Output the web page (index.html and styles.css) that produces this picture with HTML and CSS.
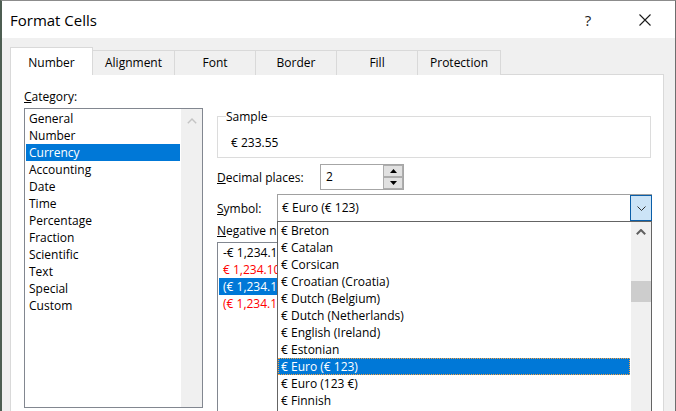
FILE: index.html
```html
<!DOCTYPE html>
<html lang="en">
<head>
<meta charset="utf-8">
<title>Format Cells</title>
<link rel="stylesheet" href="styles.css">
</head>
<body>
<div class="window">
  <div class="titlebar">
    <span class="title">Format Cells</span>
    <span class="help">?</span>
    <span class="close">
      <svg width="12" height="12" viewBox="0 0 12 12"><path d="M0.5 0.5 L11.5 11.5 M11.5 0.5 L0.5 11.5" stroke="#1a1a1a" stroke-width="1.1" fill="none"/></svg>
    </span>
  </div>
  <div class="body">
    <div class="tabs">
      <div class="tab active">Number</div>
      <div class="tab">Alignment</div>
      <div class="tab">Font</div>
      <div class="tab">Border</div>
      <div class="tab">Fill</div>
      <div class="tab">Protection</div>
    </div>
    <div class="panel">
      <div class="col-left">
        <div class="label"><u>C</u>ategory:</div>
        <div class="listbox cat">
          <div class="items">
            <div class="item">General</div>
            <div class="item">Number</div>
            <div class="item sel">Currency</div>
            <div class="item">Accounting</div>
            <div class="item">Date</div>
            <div class="item">Time</div>
            <div class="item">Percentage</div>
            <div class="item">Fraction</div>
            <div class="item">Scientific</div>
            <div class="item">Text</div>
            <div class="item">Special</div>
            <div class="item">Custom</div>
          </div>
          <div class="vscroll wide">
            <div class="arrow tall">
              <svg width="10" height="6" viewBox="0 0 10 6"><polyline points="0.8,5.2 5,1 9.2,5.2" stroke="#c4c4c4" stroke-width="1.4" fill="none"/></svg>
            </div>
          </div>
        </div>
      </div>
      <div class="col-right">
        <fieldset class="sample">
          <legend>Sample</legend>
          <div class="sample-value">€ 233.55</div>
        </fieldset>
        <div class="row dec">
          <span class="row-label dec-label"><u>D</u>ecimal places:</span>
          <div class="spinbox">
            <span class="spin-value">2</span>
            <div class="spin">
              <div class="spin-btn"><svg width="7" height="4" viewBox="0 0 7 4"><polygon points="0,4 3.5,0 7,4" fill="#000"/></svg></div>
              <div class="spin-btn"><svg width="7" height="4" viewBox="0 0 7 4"><polygon points="0,0 3.5,4 7,0" fill="#000"/></svg></div>
            </div>
          </div>
        </div>
        <div class="row sym">
          <span class="row-label sym-label"><u>S</u>ymbol:</span>
          <div class="combo">
            <span class="combo-text">€ Euro (€ 123)</span>
            <span class="combo-btn"><svg width="9" height="5" viewBox="0 0 9 5"><polyline points="0.5,0.5 4.5,4.5 8.5,0.5" stroke="#333" stroke-width="1" fill="none"/></svg></span>
            <div class="dropdown">
              <div class="items drop-items">
                <div class="item">€ Breton</div>
                <div class="item">€ Catalan</div>
                <div class="item">€ Corsican</div>
                <div class="item">€ Croatian (Croatia)</div>
                <div class="item">€ Dutch (Belgium)</div>
                <div class="item">€ Dutch (Netherlands)</div>
                <div class="item">€ English (Ireland)</div>
                <div class="item">€ Estonian</div>
                <div class="item sel focus">€ Euro (€ 123)</div>
                <div class="item">€ Euro (123 €)</div>
                <div class="item">€ Finnish</div>
              </div>
              <div class="vscroll">
                <div class="arrow">
                  <svg width="10" height="6" viewBox="0 0 10 6"><polyline points="0.8,5.2 5,1 9.2,5.2" stroke="#606060" stroke-width="2" fill="none"/></svg>
                </div>
                <div class="thumb"></div>
              </div>
            </div>
          </div>
        </div>
        <div class="label neg-label"><u>N</u>egative numbers:</div>
        <div class="listbox neg">
          <div class="items">
            <div class="item">-€ 1,234.10</div>
            <div class="item red">€ 1,234.10</div>
            <div class="item sel">(€ 1,234.10)</div>
            <div class="item red">(€ 1,234.10)</div>
          </div>
        </div>
      </div>
    </div>
  </div>
</div>
</body>
</html>
```
FILE: styles.css
```css
* { box-sizing: border-box; }
html, body { margin: 0; padding: 0; }
body {
  width: 676px;
  height: 411px;
  overflow: hidden;
  background: #46584c;
  font-family: "Open Sans", "Noto Sans", sans-serif;
  font-size: 12px;
  color: #000;
}
u { text-decoration: underline; text-underline-offset: 1px; }

.window {
  width: 676px;
  height: 411px;
  border-top: 1px solid #8c8c8c;
  border-left: 2px solid #4d5e52;
  border-right: 1px solid #6e6e6e;
  background: #f0f0f0;
  display: flex;
  flex-direction: column;
  overflow: hidden;
}

.titlebar {
  height: 37px;
  flex: none;
  background: #fff;
  display: flex;
  align-items: center;
  padding-left: 8px;
}
.title { flex: 1; font-size: 15px; color: #000; }
.help { width: 46px; text-align: center; font-size: 15px; color: #222; }
.close { width: 46px; margin-left: 11px; margin-right: 7px; display: flex; justify-content: center; }

.body { flex: 1; padding: 9px 11px 0 8px; }

.tabs {
  display: flex;
  align-items: flex-end;
  height: 28px;
  margin-bottom: -1px;
}
.tab {
  height: 25px;
  min-width: 81px;
  padding: 3px 12px 0;
  text-align: center;
  line-height: 17px;
  border-top: 1px solid #d9d9d9;
  border-right: 1px solid #d9d9d9;
  background: #f0f0f0;
}
.tab.active {
  height: 28px;
  min-width: 83px;
  padding-top: 6px;
  border: 1px solid #d9d9d9;
  border-bottom: none;
  background: #fff;
  position: relative;
  z-index: 1;
}

.panel {
  height: 360px;
  background: #fff;
  border: 1px solid #d9d9d9;
  display: flex;
  gap: 14px;
  padding: 13px 12px 0 13px;
}
.col-left { width: 179px; flex: none; }
.col-right { flex: 1; min-width: 0; }

.label { line-height: 17px; white-space: nowrap; }

.listbox {
  margin-top: 3px;
  border: 1px solid #828790;
  display: flex;
  background: #fff;
}
.listbox.cat { height: 300px; }
.listbox.neg { height: 200px; }
.items { flex: 1; padding: 1px; min-width: 0; }
.item { height: 17px; line-height: 17px; padding-left: 3px; padding-top: 1px; line-height: 16px; white-space: nowrap; overflow: hidden; }
.neg .item { padding-left: 4px; }
.item.sel { background: #0078d7; color: #fff; }
.item.red { color: #ff0000; }
.item.focus { outline: 1px dotted #f5a142; outline-offset: -1px; }

.vscroll { width: 20px; flex: none; background: #f0f0f0; display: flex; flex-direction: column; }
.vscroll.wide { width: 21px; }
.arrow { height: 20px; display: flex; align-items: center; justify-content: center; }
.arrow.tall { height: 23px; }
.thumb { margin-top: 39px; height: 21px; background: #cdcdcd; }

.sample {
  margin: 20px 0 0;
  padding: 0 0 6px 8px;
  border: 1px solid #dcdcdc;
  min-width: 0;
}
.sample legend { padding: 0; line-height: 17px; }
.sample-value { padding: 9px 0 0 5px; line-height: 17px; }

.row { display: flex; align-items: center; }
.row-label { flex: none; line-height: 17px; }
.dec { margin-top: 6px; height: 26px; }
.dec-label { width: 103px; }
.sym { margin-top: 4px; height: 28px; }
.sym-label { width: 60px; }

.spinbox {
  width: 84px;
  height: 26px;
  border: 1px solid #a6a6a6;
  display: flex;
  padding-left: 5px;
}
.spin-value { flex: 1; line-height: 24px; }
.spin { width: 20px; display: flex; flex-direction: column; }
.spin-btn {
  height: 12px;
  border: 1px solid #adadad;
  background: #e1e1e1;
  display: flex;
  align-items: center;
  justify-content: center;
}

.combo {
  flex: 1;
  height: 28px;
  margin-right: -1px;
  border: 1px solid #a0a0a0;
  border-right: none;
  display: flex;
  position: relative;
}
.combo-text { flex: 1; padding-left: 4px; line-height: 26px; }
.combo-btn {
  width: 22px;
  height: 26px;
  border: 1px solid #0a5ea8;
  background: #cce4f7;
  display: flex;
  align-items: center;
  justify-content: center;
}
.dropdown {
  position: absolute;
  left: -1px;
  top: 26px;
  width: 375px;
  height: 200px;
  border: 1px solid #646464;
  background: #fff;
  display: flex;
  z-index: 2;
}
.drop-items { padding: 0 1px 0 0; }
```
